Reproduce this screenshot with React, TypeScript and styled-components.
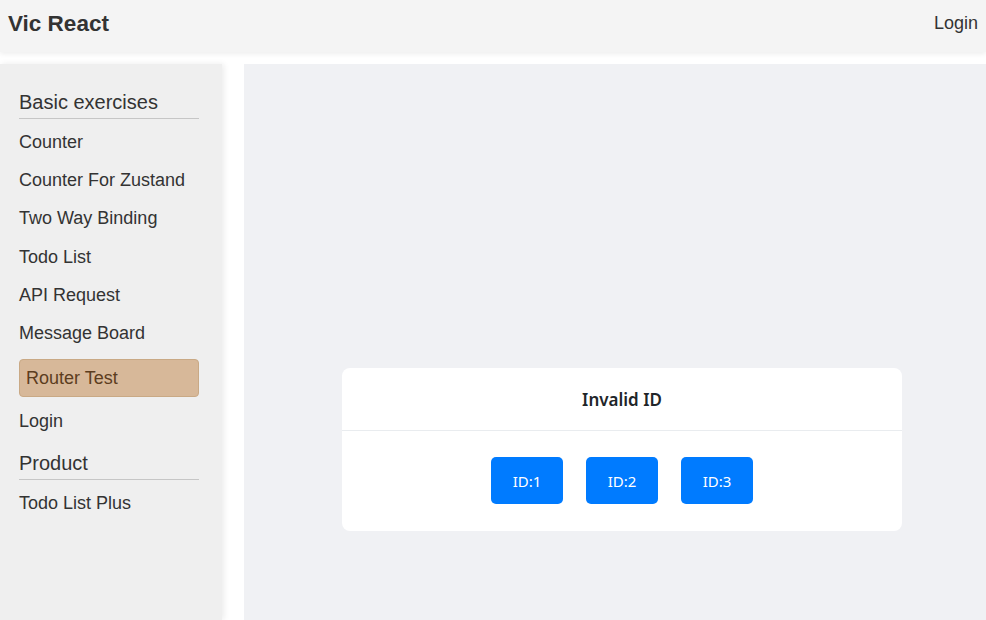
import React from "react";
import styled, { createGlobalStyle } from "styled-components";

const Global = createGlobalStyle`
  html, body { margin: 0; padding: 0; background: #ffffff; }
  body { font-family: "Liberation Sans", Arial, sans-serif; color: #333; }
  * { box-sizing: border-box; }
`;

const Page = styled.div`
  width: 986px;
  height: 620px;
  overflow: hidden;
  display: flex;
  flex-direction: column;
`;

const Header = styled.header`
  height: 52px;
  flex: none;
  background: #f4f4f4;
  box-shadow: 0 2px 5px rgba(0, 0, 0, 0.07);
  display: flex;
  align-items: center;
  justify-content: space-between;
  padding: 0 8px 5px 8px;
  position: relative;
  z-index: 2;
`;

const Brand = styled.div`
  font-size: 22.5px;
  font-weight: 700;
  color: #333;
`;

const HeaderLink = styled.div`
  font-size: 18px;
  color: #333;
`;

const Body = styled.div`
  flex: 1;
  display: flex;
  gap: 22px;
  padding-top: 12px;
  min-height: 0;
`;

const Sidebar = styled.nav`
  width: 222px;
  flex: none;
  background: #efefef;
  box-shadow: 2px 0 6px rgba(0, 0, 0, 0.08);
  padding: 26px 23px 0 19px;
`;

const SectionTitle = styled.div<{ $spaced?: boolean }>`
  font-size: 20px;
  line-height: 24px;
  color: #333;
  padding-bottom: 4px;
  border-bottom: 1px solid #c6c6c6;
  margin-top: ${(p) => (p.$spaced ? "10px" : "0")};
`;

const NavList = styled.div`
  margin-top: 4px;
  display: flex;
  flex-direction: column;
`;

const NavItem = styled.div<{ $active?: boolean }>`
  font-size: 18px;
  line-height: 22.2px;
  padding: ${(p) => (p.$active ? "7px 6px" : "8px 0")};
  color: ${(p) => (p.$active ? "#5c3d1e" : "#333")};
  background: ${(p) => (p.$active ? "#d7b899" : "transparent")};
  border: ${(p) => (p.$active ? "1px solid #c9a985" : "none")};
  border-radius: 4px;
  margin: ${(p) => (p.$active ? "7px 0 5px" : "0")};
`;

const Main = styled.main`
  flex: 1;
  background: #f0f1f4;
  display: flex;
  flex-direction: column;
  align-items: center;
  padding: 304px 0 0 14px;
`;

const Card = styled.div`
  width: 560px;
  background: #ffffff;
  border-radius: 8px;
  font-family: "Noto Sans", "Open Sans", sans-serif;
`;

const CardHeader = styled.div`
  height: 63px;
  display: flex;
  align-items: center;
  justify-content: center;
  font-size: 17px;
  font-weight: 600;
  color: #212529;
  border-bottom: 1px solid #e9ecef;
`;

const CardBody = styled.div`
  display: flex;
  justify-content: center;
  gap: 23px;
  padding: 26px 0 27px;
`;

const IdButton = styled.button`
  width: 72px;
  height: 47px;
  border: none;
  border-radius: 5px;
  background: #007bff;
  color: #ffffff;
  font-family: "Noto Sans", "Open Sans", sans-serif;
  font-size: 15px;
  cursor: pointer;
`;

const basic = [
  "Counter",
  "Counter For Zustand",
  "Two Way Binding",
  "Todo List",
  "API Request",
  "Message Board",
  "Router Test",
  "Login",
];

export default function App() {
  return (
    <Page>
      <Global />
      <Header>
        <Brand>Vic React</Brand>
        <HeaderLink>Login</HeaderLink>
      </Header>
      <Body>
        <Sidebar>
          <SectionTitle>Basic exercises</SectionTitle>
          <NavList>
            {basic.map((b) => (
              <NavItem key={b} $active={b === "Router Test"}>
                {b}
              </NavItem>
            ))}
          </NavList>
          <SectionTitle $spaced>Product</SectionTitle>
          <NavList>
            <NavItem>Todo List Plus</NavItem>
          </NavList>
        </Sidebar>
        <Main>
          <Card>
            <CardHeader>Invalid ID</CardHeader>
            <CardBody>
              <IdButton>ID:1</IdButton>
              <IdButton>ID:2</IdButton>
              <IdButton>ID:3</IdButton>
            </CardBody>
          </Card>
        </Main>
      </Body>
    </Page>
  );
}
